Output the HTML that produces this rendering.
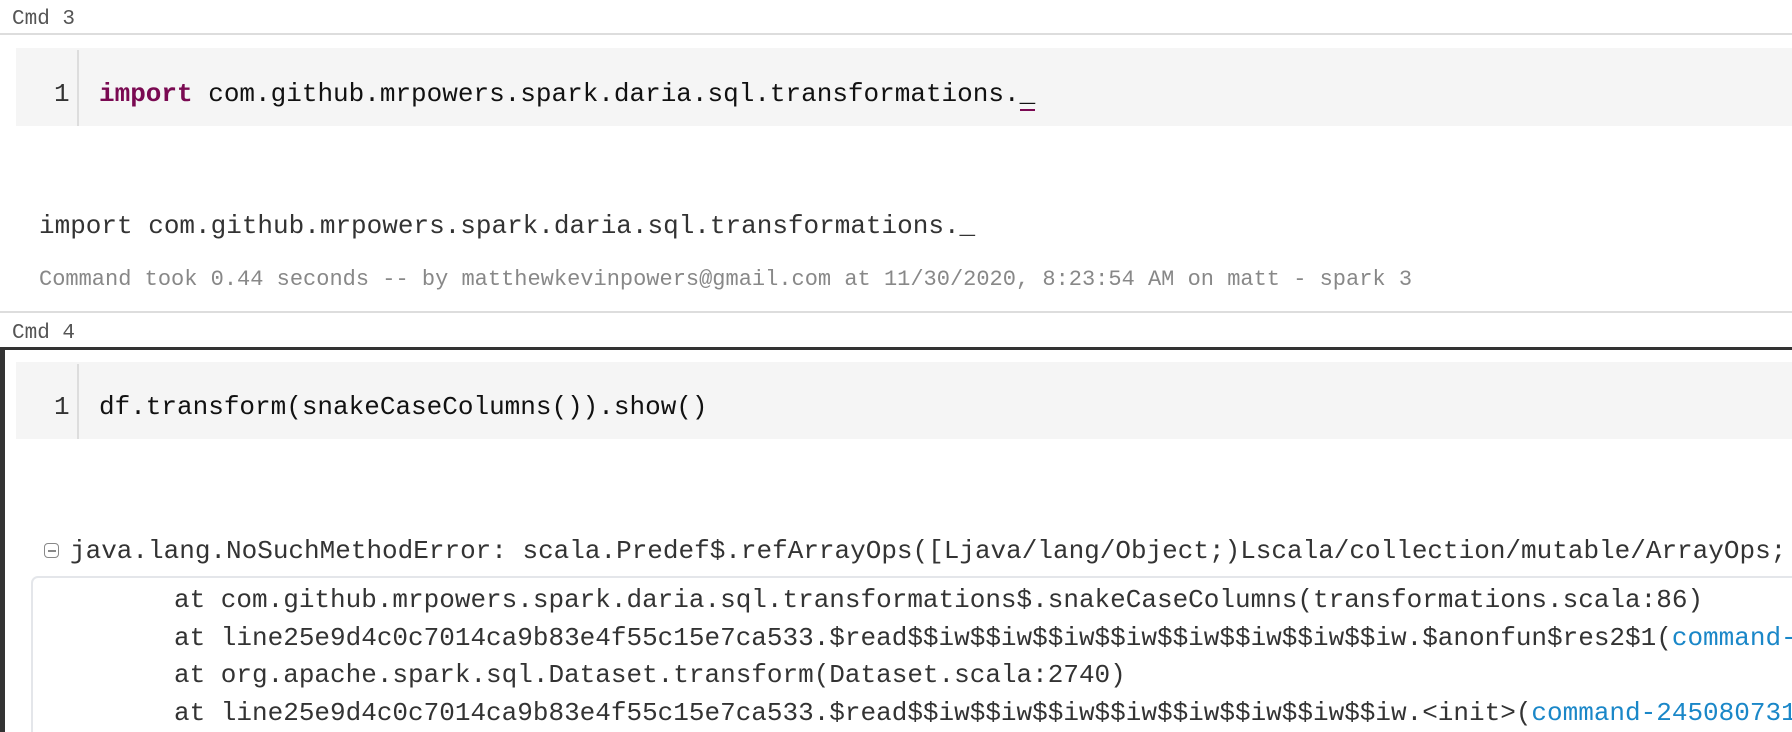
<!DOCTYPE html>
<html><head><meta charset="utf-8"><style>
html,body{margin:0;width:1792px;height:732px;overflow:hidden;background:#fff;}
#w{position:relative;width:1792px;height:732px;overflow:hidden;font-family:"Liberation Mono",monospace;}
.a{position:absolute;white-space:pre;}
.lbl{font-size:21px;color:#555;line-height:24px;}
.code{font-size:26px;color:#111;line-height:30px;}
.hr{position:absolute;left:0;width:1792px;height:2px;background:#ddd;}
.box{position:absolute;left:16px;width:1776px;background:#f5f5f5;}
.gut{position:absolute;left:77px;width:2px;background:#ddd;}
.out{font-size:26px;color:#333;line-height:30px;}
.blue{color:#1a87c8;}
</style></head><body><div id="w">
<div class="a lbl" style="left:12px;top:8px">Cmd 3</div>
<div class="hr" style="top:33px"></div>
<div class="box" style="top:48px;height:78px"></div>
<div class="gut" style="top:50px;height:76px"></div>
<div class="a code" style="left:54px;top:79px;color:#333">1</div>
<div class="a code" style="left:99px;top:79px"><b style="color:#7a0a52">import</b> com.github.mrpowers.spark.daria.sql.transformations.<span style="border-bottom:2px solid #7a0a52">_</span></div>
<div class="a out" style="left:39px;top:211px">import com.github.mrpowers.spark.daria.sql.transformations._</div>
<div class="a" style="left:39px;top:267px;font-size:22px;color:#888;line-height:26px">Command took 0.44 seconds -- by matthewkevinpowers@gmail.com at 11/30/2020, 8:23:54 AM on matt - spark 3</div>
<div class="hr" style="top:311px"></div>
<div class="a lbl" style="left:12px;top:322px">Cmd 4</div>
<div style="position:absolute;left:0;top:347px;width:1792px;height:3px;background:#333"></div>
<div style="position:absolute;left:0;top:347px;width:5px;height:385px;background:#333"></div>
<div class="box" style="top:362px;height:77px"></div>
<div class="gut" style="top:364px;height:75px"></div>
<div class="a code" style="left:54px;top:392px;color:#333">1</div>
<div class="a code" style="left:99px;top:392px">df.transform(snakeCaseColumns()).show()</div>
<div style="position:absolute;left:44px;top:543px;width:13px;height:13px;border:1.5px solid #888;border-radius:4px"></div>
<div style="position:absolute;left:48px;top:550px;width:8px;height:1.5px;background:#888"></div>
<div class="a out" style="left:70px;top:536px">java.lang.NoSuchMethodError: scala.Predef$.refArrayOps([Ljava/lang/Object;)Lscala/collection/mutable/ArrayOps;</div>
<div style="position:absolute;left:31px;top:576px;width:1800px;height:300px;border:2px solid #e4e6ea;border-radius:7px"></div>
<div class="a out" style="left:174px;top:582px;line-height:37.7px">at com.github.mrpowers.spark.daria.sql.transformations$.snakeCaseColumns(transformations.scala:86)
at line25e9d4c0c7014ca9b83e4f55c15e7ca533.$read$$iw$$iw$$iw$$iw$$iw$$iw$$iw$$iw.$anonfun$res2$1(<span class="blue">command-2450807317</span>
at org.apache.spark.sql.Dataset.transform(Dataset.scala:2740)
at line25e9d4c0c7014ca9b83e4f55c15e7ca533.$read$$iw$$iw$$iw$$iw$$iw$$iw$$iw$$iw.&lt;init&gt;(<span class="blue">command-2450807317</span></div>
</div></body></html>
